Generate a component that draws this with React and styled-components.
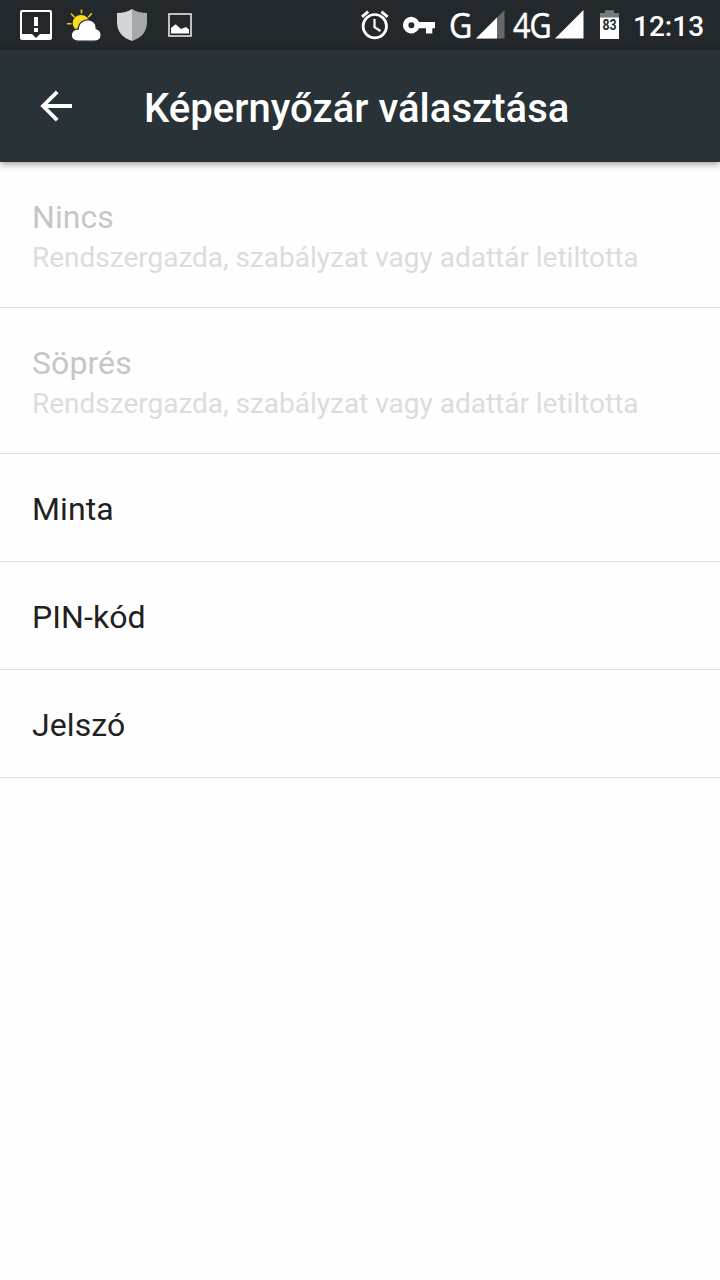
import React from 'react'
import styled, { createGlobalStyle } from 'styled-components'

const GlobalStyle = createGlobalStyle`
    * {
        box-sizing: border-box;
    }

    body {
        margin: 0;
        background-color: #fefefe;
        font-family: Roboto, sans-serif;
    }
`

const Screen = styled.div`
    width: 720px;
    min-height: 1280px;
    background-color: #fefefe;
`

const StatusBar = styled.div`
    display: flex;
    justify-content: space-between;
    height: 50px;
    padding: 0 16px 0 12px;
    background-color: #22282b;
    color: #fff;
`

const StatusGroup = styled.div`
    display: flex;
    align-items: center;
    height: 50px;

    svg {
        display: block;
        flex: none;
    }
`

const Network = styled.span`
    width: ${(props) => props.$width}px;
    margin-left: ${(props) => props.$gap}px;
    font-family: "Open Sans", sans-serif;
    font-size: 35px;
    line-height: 50px;
    white-space: nowrap;
    transform: scaleX(${(props) => props.$scale});
    transform-origin: left;
    letter-spacing: ${(props) => props.$spacing || 0}px;
    -webkit-text-stroke: 0.5px #fff;
`

const Clock = styled.span`
    width: 71px;
    margin-left: 14px;
    padding-top: 4px;
    font-size: 28px;
    font-weight: 500;
    line-height: 52px;
    white-space: nowrap;
`

const AppBar = styled.header`
    position: relative;
    display: flex;
    align-items: center;
    height: 112px;
    padding-left: 32px;
    background-color: #283237;
    color: #fff;
    box-shadow: 0 2px 7px rgba(0, 0, 0, 0.4);
`

const BackButton = styled.button`
    width: 48px;
    height: 48px;
    padding: 0;
    border: 0;
    background: none;
    color: inherit;

    svg {
        display: block;
    }
`

const Title = styled.h1`
    margin: 6px 0 0 64px;
    font-size: 40px;
    font-weight: 500;
    line-height: 48px;
    white-space: nowrap;
    letter-spacing: 0.04px;
`

const List = styled.ul`
    margin: 0;
    padding: 0;
    list-style: none;
`

const Row = styled.li`
    height: ${(props) => (props.$tall ? 146 : 108)}px;
    padding: 36px 32px 0;
    border-bottom: 1px solid #dedede;
`

const RowTitle = styled.div`
    color: ${(props) => (props.$disabled ? '#c6c6c6' : '#212121')};
    font-size: 32px;
    line-height: 38px;
    letter-spacing: 0.08px;
`

const RowSummary = styled.div`
    margin-top: 5px;
    color: #dcdcdc;
    font-size: 28px;
    line-height: 33px;
    white-space: nowrap;
    letter-spacing: -0.01px;
`

const AlertIcon = () => (
    <svg width="48" height="50" viewBox="0 0 48 50">
        <path
            fill="#fff"
            fillRule="evenodd"
            d="M10 10H38Q40 10 40 12V38Q40 40 38 40H10Q8 40 8 38V12Q8 10 10 10ZM11 12Q10 12 10 13V34H20L24 38L28 34H38V13Q38 12 37 12Z"
        />
        <path fill="#fff" d="M22 17h4v9h-4zM22 28h4v4h-4z" />
    </svg>
)

const WeatherIcon = () => (
    <svg width="48" height="50" viewBox="0 0 48 50">
        <path
            stroke="#e8c820"
            strokeWidth="1.6"
            d="M21.5 9.5v4M11 13.5l3.5 3.7M31.8 13.2l-3.5 4M7 23.7h4.5"
        />
        <circle cx="21" cy="23.2" r="8.3" fill="#fddc18" />
        <path
            fill="#fff"
            stroke="#22282b"
            strokeWidth="1.2"
            d="M18 41.2C8.5 41.2 9.5 28.5 18.2 29.2C18.5 21.5 25 19.2 29.3 20C34 20.9 36.5 24.4 36.2 28.6C43 30.6 43 41.2 34.5 41.2Z"
        />
    </svg>
)

const ShieldIcon = () => (
    <svg width="48" height="50" viewBox="0 0 48 50">
        <path fill="#d3d5d6" d="M24 9Q18 13 9 13V22Q9 36 24 41Z" />
        <path fill="#a5aaab" d="M24 9Q30 13 39 13V22Q39 36 24 41Z" />
    </svg>
)

const PictureIcon = () => (
    <svg width="48" height="50" viewBox="0 0 48 50">
        <rect x="13" y="14" width="22" height="22" fill="none" stroke="#d9dbdb" strokeWidth="1.7" />
        <path fill="#fff" d="M15 33.5V28L19.7 24.3L25 29L30 27L33 29.5V33.5Z" />
    </svg>
)

const AlarmIcon = () => (
    <svg width="32" height="50" viewBox="0 0 32 50" fill="none" stroke="#fff">
        <circle cx="15.8" cy="26.2" r="11.7" strokeWidth="2.7" />
        <path strokeWidth="2.9" d="M3 16.8L9.2 11.7M28.6 16.8L22.4 11.7" />
        <path strokeWidth="2.2" d="M15.5 19V27.2L21.5 31" />
    </svg>
)

const KeyIcon = () => (
    <svg width="32" height="50" viewBox="0 0 32 50">
        <path
            fill="#fff"
            fillRule="evenodd"
            d="M16 22H32V28.3H29.3V33.6H23V28.3H16A8.3 8.3 0 1 1 16 22ZM8.4 22.2A3 3 0 1 0 8.4 28.2A3 3 0 1 0 8.4 22.2Z"
        />
    </svg>
)

const SignalIcon = ({ partial }) => (
    <svg width="29" height="50" viewBox="0 0 29 50">
        <path fill={partial ? '#64696b' : '#fff'} d="M0 38.5L28.5 10V38.5Z" />
        {partial && <path fill="#fff" d="M0 38.5L21 17.5V38.5Z" />}
    </svg>
)

const BatteryIcon = () => (
    <svg width="19" height="50" viewBox="0 0 19 50">
        <path fill="#757a7c" d="M5 10.3H14V13H19V18H0V13H5Z" />
        <path fill="#fff" d="M0 17.5H19V39H0Z" />
        <text
            x="9.5"
            y="30"
            fill="#22282b"
            fontFamily="Roboto, sans-serif"
            fontSize="14"
            fontWeight="700"
            textAnchor="middle"
            textLength="14"
            lengthAdjust="spacingAndGlyphs"
        >
            83
        </text>
    </svg>
)

const ArrowIcon = () => (
    <svg width="48" height="48" viewBox="0 0 48 48" fill="none" stroke="#fff" strokeWidth="3.8">
        <path d="M40 24H11M25.2 9.8L11 24L25.2 38.2" />
    </svg>
)

const options = [
    { title: 'Nincs', summary: 'Rendszergazda, szabályzat vagy adattár letiltotta' },
    { title: 'Söprés', summary: 'Rendszergazda, szabályzat vagy adattár letiltotta' },
    { title: 'Minta' },
    { title: 'PIN-kód' },
    { title: 'Jelszó' },
]

const Spacer = styled.span`
    flex: none;
    width: ${(props) => props.$size}px;
`

const App = () => {
    return (
        <Screen>
            <GlobalStyle />
            <StatusBar>
                <StatusGroup>
                    <AlertIcon />
                    <WeatherIcon />
                    <ShieldIcon />
                    <PictureIcon />
                </StatusGroup>
                <StatusGroup>
                    <AlarmIcon />
                    <Spacer $size={12} />
                    <KeyIcon />
                    <Network $gap={14} $width={27} $scale={0.92}>G</Network>
                    <SignalIcon partial />
                    <Network $gap={8} $width={42} $scale={0.87} $spacing={-1}>4G</Network>
                    <SignalIcon />
                    <Spacer $size={16} />
                    <BatteryIcon />
                    <Clock>12:13</Clock>
                </StatusGroup>
            </StatusBar>
            <AppBar>
                <BackButton aria-label="Vissza">
                    <ArrowIcon />
                </BackButton>
                <Title>Képernyőzár választása</Title>
            </AppBar>
            <List>
                {options.map((option) => (
                    <Row key={option.title} $tall={!!option.summary}>
                        <RowTitle $disabled={!!option.summary}>{option.title}</RowTitle>
                        {option.summary && <RowSummary>{option.summary}</RowSummary>}
                    </Row>
                ))}
            </List>
        </Screen>
    )
}

export default App
